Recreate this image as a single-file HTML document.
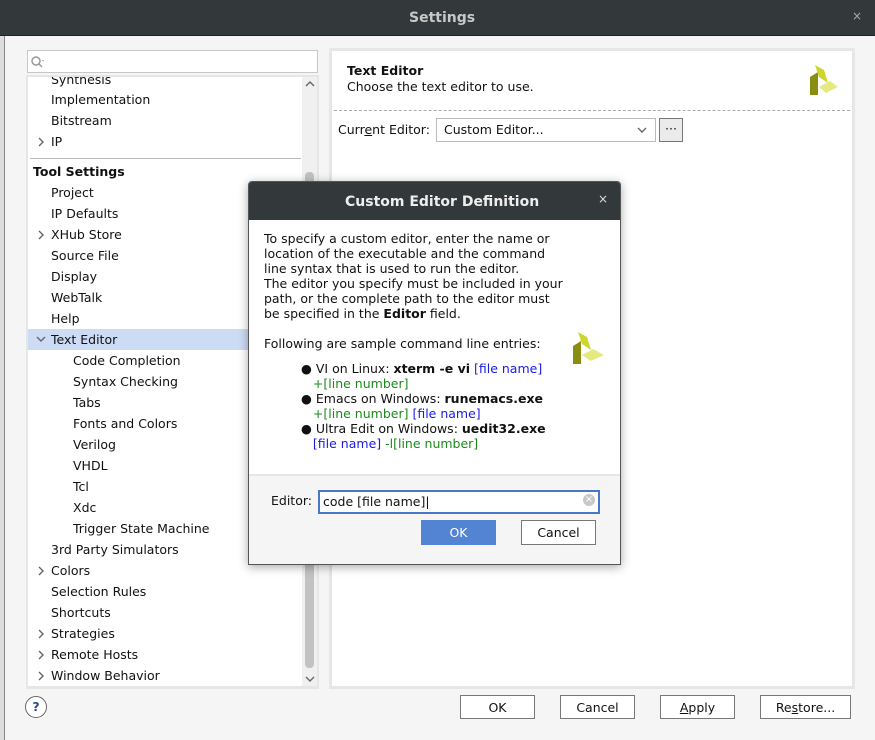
<!DOCTYPE html>
<html><head><meta charset="utf-8"><style>
*{margin:0;padding:0;box-sizing:border-box}
body{width:875px;height:740px;overflow:hidden;background:#f5f5f5;font-family:"DejaVu Sans","Liberation Sans",sans-serif;font-size:12.5px;color:#111;position:relative}
.a{position:absolute;white-space:nowrap}
.title{left:0;top:0;width:875px;height:36px;background:#33383a;border-bottom:1px solid #222}
.tree div.r{position:absolute;height:21px;line-height:21px;white-space:nowrap}
.chev{position:absolute}
.btn{position:absolute;border:1px solid #777;background:#fff;text-align:center;line-height:22px;height:24px}
.blue{color:#1a1ae6}.green{color:#1b8a1b}
</style></head><body>
<div class="a title"></div>
<div class="a" style="left:0;top:36px;width:5px;height:704px;background:#ddd;border-right:1px solid #888"></div>
<div class="a" style="left:409px;top:10px;color:#c8c8c8;font-weight:bold;font-size:14px">Settings</div>
<div class="a" style="left:852px;top:9px;color:#aaa;font-size:12px">×</div>

<div class="a" style="left:27px;top:50px;width:291px;height:23px;background:#fff;border:1px solid #c8c8c8"></div>
<svg class="a" style="left:30px;top:55px" width="16" height="14"><circle cx="6" cy="6" r="4" fill="none" stroke="#999" stroke-width="1.5"/><line x1="9" y1="9" x2="12" y2="12" stroke="#999" stroke-width="1.5"/><path d="M12 5l2 0l-1 1.5z" fill="#999"/></svg>

<div class="a" style="left:26px;top:75px;width:293px;height:614px;background:#e6e6e6"></div>
<div class="a tree" style="left:28px;top:77px;width:274px;height:609px;background:#fff;overflow:hidden">
<div style="position:absolute;left:0;top:-1px;width:274px;height:610px">
<div class="r" style="left:23px;top:-7px">Synthesis</div>
<div class="r" style="left:23px;top:13px">Implementation</div>
<div class="r" style="left:23px;top:34px">Bitstream</div>
<svg class="chev" style="left:9px;top:60px" width="8" height="12"><path d="M2 2l4 4l-4 4" fill="none" stroke="#666" stroke-width="1.4"/></svg><div class="r" style="left:23px;top:55px">IP</div>
<div class="a" style="left:2px;top:82px;width:271px;height:1px;background:#bbb"></div>
<div class="r" style="left:5px;top:85px;font-weight:bold">Tool Settings</div>
<div class="r" style="left:23px;top:106px">Project</div>
<div class="r" style="left:23px;top:127px">IP Defaults</div>
<svg class="chev" style="left:9px;top:153px" width="8" height="12"><path d="M2 2l4 4l-4 4" fill="none" stroke="#666" stroke-width="1.4"/></svg><div class="r" style="left:23px;top:148px">XHub Store</div>
<div class="r" style="left:23px;top:169px">Source File</div>
<div class="r" style="left:23px;top:190px">Display</div>
<div class="r" style="left:23px;top:211px">WebTalk</div>
<div class="r" style="left:23px;top:232px">Help</div>
<div class="a" style="left:0;top:253px;width:274px;height:21px;background:#cddcf5"></div>
<svg class="chev" style="left:7px;top:259px" width="12" height="8"><path d="M2 2l4 4l4 -4" fill="none" stroke="#666" stroke-width="1.4"/></svg><div class="r" style="left:23px;top:253px">Text Editor</div>
<div class="r" style="left:45px;top:274px">Code Completion</div>
<div class="r" style="left:45px;top:295px">Syntax Checking</div>
<div class="r" style="left:45px;top:316px">Tabs</div>
<div class="r" style="left:45px;top:337px">Fonts and Colors</div>
<div class="r" style="left:45px;top:358px">Verilog</div>
<div class="r" style="left:45px;top:379px">VHDL</div>
<div class="r" style="left:45px;top:400px">Tcl</div>
<div class="r" style="left:45px;top:421px">Xdc</div>
<div class="r" style="left:45px;top:442px">Trigger State Machine</div>
<div class="r" style="left:23px;top:463px">3rd Party Simulators</div>
<svg class="chev" style="left:9px;top:489px" width="8" height="12"><path d="M2 2l4 4l-4 4" fill="none" stroke="#666" stroke-width="1.4"/></svg><div class="r" style="left:23px;top:484px">Colors</div>
<div class="r" style="left:23px;top:505px">Selection Rules</div>
<div class="r" style="left:23px;top:526px">Shortcuts</div>
<svg class="chev" style="left:9px;top:552px" width="8" height="12"><path d="M2 2l4 4l-4 4" fill="none" stroke="#666" stroke-width="1.4"/></svg><div class="r" style="left:23px;top:547px">Strategies</div>
<svg class="chev" style="left:9px;top:573px" width="8" height="12"><path d="M2 2l4 4l-4 4" fill="none" stroke="#666" stroke-width="1.4"/></svg><div class="r" style="left:23px;top:568px">Remote Hosts</div>
<svg class="chev" style="left:9px;top:594px" width="8" height="12"><path d="M2 2l4 4l-4 4" fill="none" stroke="#666" stroke-width="1.4"/></svg><div class="r" style="left:23px;top:589px">Window Behavior</div>
</div>
</div>
<div class="a" style="left:302px;top:77px;width:15px;height:609px;background:#f0f0f0"></div>
<div class="a" style="left:305px;top:172px;width:9px;height:496px;background:#c2c2c2;border-radius:4px"></div>
<svg class="a" style="left:304px;top:80px" width="12" height="8"><path d="M2 6l4 -4l4 4" fill="none" stroke="#666" stroke-width="1.4"/></svg>
<svg class="a" style="left:304px;top:675px" width="12" height="8"><path d="M2 2l4 4l4 -4" fill="none" stroke="#666" stroke-width="1.4"/></svg>

<div class="a" style="left:25px;top:696px;width:22px;height:22px;border:1px solid #666;border-radius:50%;text-align:center;line-height:20px;color:#2a4a8a;font-weight:bold;background:#fff">?</div>

<div class="a" style="left:329px;top:48px;width:526px;height:641px;background:#e6e6e6"></div>
<div class="a" style="left:332px;top:51px;width:520px;height:635px;background:#fff"></div>
<div class="a" style="left:347px;top:63px;font-weight:bold">Text Editor</div>
<div class="a" style="left:347px;top:79px">Choose the text editor to use.</div>
<svg class="a" style="left:806px;top:63px" width="33" height="33"><polygon points="4,14 12,9 12,32 4,32" fill="#8a8e10"/><polygon points="9,2 18,7 22,20 13,14" fill="#cfd62a"/><polygon points="13,24 24,18 32,24 20,30" fill="#e5ea80"/></svg>
<div class="a" style="left:334px;top:110px;width:516px;border-top:1px dashed #aaa"></div>
<div class="a" style="left:338px;top:122px">Curr<u>e</u>nt Editor:</div>
<div class="a" style="left:436px;top:118px;width:220px;height:24px;border:1px solid #bbb;background:#fff;padding-left:7px;line-height:22px">Custom Editor...</div>
<svg class="a" style="left:636px;top:126px" width="12" height="8"><path d="M2 2l4 4l4 -4" fill="none" stroke="#666" stroke-width="1.4"/></svg>
<div class="a" style="left:659px;top:118px;width:24px;height:24px;border:1px solid #777;background:#ebebeb;text-align:center;line-height:20px">···</div>

<div class="btn" style="left:460px;top:695px;width:75px;line-height:23px">OK</div>
<div class="btn" style="left:560px;top:695px;width:75px;line-height:23px">Cancel</div>
<div class="btn" style="left:660px;top:695px;width:75px;line-height:23px"><u>A</u>pply</div>
<div class="btn" style="left:760px;top:695px;width:91px;line-height:23px">Re<u>s</u>tore...</div>

<div class="a" style="left:248px;top:181px;width:373px;height:384px;background:#fff;border:1px solid #555;border-radius:4px 4px 0 0;box-shadow:0 2px 10px rgba(0,0,0,.35);overflow:hidden">
<div class="a" style="left:0;top:0;width:373px;height:38px;background:#33383a"></div>
<div class="a" style="left:96px;top:12px;color:#eee;font-weight:bold;font-size:14px">Custom Editor Definition</div>
<div class="a" style="left:349px;top:10px;color:#ddd;font-size:12px">×</div>
<div class="a" style="left:15px;top:49px;line-height:15px">To specify a custom editor, enter the name or<br>location of the executable and the command<br>line syntax that is used to run the editor.<br>The editor you specify must be included in your<br>path, or the complete path to the editor must<br>be specified in the <b>Editor</b> field.</div>
<div class="a" style="left:15px;top:154px">Following are sample command line entries:</div>
<svg class="a" style="left:322px;top:149px" width="35" height="35"><polygon points="2,15 10,10 10,33 2,33" fill="#8a8e10"/><polygon points="7,1 16,6 20,19 11,13" fill="#cfd62a"/><polygon points="11,24 22,18 33,24 20,30" fill="#e5ea80"/></svg>
<div class="a" style="left:52px;top:179px;line-height:15px">● VI on Linux: <b>xterm -e vi</b> <span class="blue">[file name]</span><br>&nbsp;&nbsp;&nbsp;<span class="green">+[line number]</span><br>● Emacs on Windows: <b>runemacs.exe</b><br>&nbsp;&nbsp;&nbsp;<span class="green">+[line number]</span> <span class="blue">[file name]</span><br>● Ultra Edit on Windows: <b>uedit32.exe</b><br>&nbsp;&nbsp;&nbsp;<span class="blue">[file name]</span> <span class="green">-l[line number]</span></div>
<div class="a" style="left:0;top:292px;width:373px;height:92px;background:#f5f5f5;border-top:2px solid #e6e6e6"></div>
<div class="a" style="left:22px;top:311px">Editor:</div>
<div class="a" style="left:69px;top:308px;width:282px;height:24px;border:2px solid #4a78c8;background:#fff;padding-left:3px;line-height:20px">code [file name]|</div>
<div class="a" style="left:334px;top:312px;width:12px;height:12px;border-radius:50%;background:#c8c8c8;color:#fff;font-size:10px;line-height:12px;text-align:center">×</div>
<div class="a" style="left:172px;top:338px;width:75px;height:25px;background:#5383d3;color:#fff;text-align:center;line-height:25px">OK</div>
<div class="btn" style="left:272px;top:338px;width:75px;height:25px;line-height:23px">Cancel</div>
</div>
</body></html>
